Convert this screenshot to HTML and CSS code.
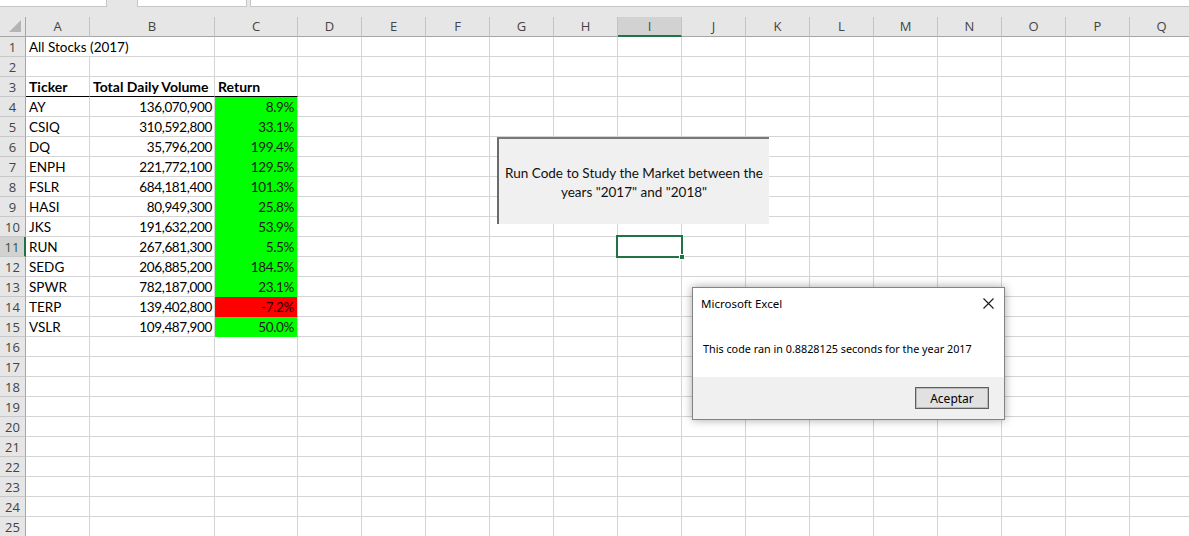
FILE: index.html
```html
<!DOCTYPE html>
<html lang="es">
<head>
<meta charset="utf-8">
<title>All Stocks (2017)</title>
<link rel="stylesheet" href="styles.css">
</head>
<body>
<div class="top">
  <div class="box namebox"></div>
  <div class="box fxbtns"></div>
  <div class="box fxbar"></div>
</div>
<div class="strip"></div>
<div class="sheet">
  <div class="row hdr">
    <span class="corner"><svg width="13" height="13" viewBox="0 0 13 13"><path d="M12 0 L12 12 L0 12 Z" fill="#b4b4b4"/></svg></span>
    <span class="ch">A</span><span class="ch">B</span><span class="ch">C</span><span class="ch">D</span><span class="ch">E</span><span class="ch">F</span><span class="ch">G</span><span class="ch">H</span><span class="ch sel">I</span><span class="ch">J</span><span class="ch">K</span><span class="ch">L</span><span class="ch">M</span><span class="ch">N</span><span class="ch">O</span><span class="ch">P</span><span class="ch">Q</span>
  </div>
  <div class="row"><span class="rh">1</span><span class="txt wide">All Stocks (2017)</span><span></span><span></span><span></span><span></span><span></span><span></span><span></span><span></span><span></span><span></span><span></span><span></span><span></span><span></span><span></span><span></span></div>
  <div class="row"><span class="rh">2</span><span></span><span></span><span></span><span></span><span></span><span></span><span></span><span></span><span></span><span></span><span></span><span></span><span></span><span></span><span></span><span></span><span></span></div>
  <div class="row"><span class="rh">3</span><span class="txt b ul">Ticker</span><span class="txt b ul">Total Daily Volume</span><span class="txt b ul">Return</span><span></span><span></span><span></span><span></span><span></span><span></span><span></span><span></span><span></span><span></span><span></span><span></span><span></span><span></span></div>
  <div class="row"><span class="rh">4</span><span class="txt">AY</span><span class="num">136,070,900</span><span class="num pos">8.9%</span><span></span><span></span><span></span><span></span><span></span><span></span><span></span><span></span><span></span><span></span><span></span><span></span><span></span><span></span></div>
  <div class="row"><span class="rh">5</span><span class="txt">CSIQ</span><span class="num">310,592,800</span><span class="num pos">33.1%</span><span></span><span></span><span></span><span></span><span></span><span></span><span></span><span></span><span></span><span></span><span></span><span></span><span></span><span></span></div>
  <div class="row"><span class="rh">6</span><span class="txt">DQ</span><span class="num">35,796,200</span><span class="num pos">199.4%</span><span></span><span></span><span></span><span></span><span></span><span></span><span></span><span></span><span></span><span></span><span></span><span></span><span></span><span></span></div>
  <div class="row"><span class="rh">7</span><span class="txt">ENPH</span><span class="num">221,772,100</span><span class="num pos">129.5%</span><span></span><span></span><span></span><span></span><span></span><span></span><span></span><span></span><span></span><span></span><span></span><span></span><span></span><span></span></div>
  <div class="row"><span class="rh">8</span><span class="txt">FSLR</span><span class="num">684,181,400</span><span class="num pos">101.3%</span><span></span><span></span><span></span><span></span><span></span><span></span><span></span><span></span><span></span><span></span><span></span><span></span><span></span><span></span></div>
  <div class="row"><span class="rh">9</span><span class="txt">HASI</span><span class="num">80,949,300</span><span class="num pos">25.8%</span><span></span><span></span><span></span><span></span><span></span><span></span><span></span><span></span><span></span><span></span><span></span><span></span><span></span><span></span></div>
  <div class="row"><span class="rh">10</span><span class="txt">JKS</span><span class="num">191,632,200</span><span class="num pos">53.9%</span><span></span><span></span><span></span><span></span><span></span><span></span><span></span><span></span><span></span><span></span><span></span><span></span><span></span><span></span></div>
  <div class="row"><span class="rh sel">11</span><span class="txt">RUN</span><span class="num">267,681,300</span><span class="num pos">5.5%</span><span></span><span></span><span></span><span></span><span></span><span class="active"><em class="cursor"></em></span><span></span><span></span><span></span><span></span><span></span><span></span><span></span><span></span></div>
  <div class="row"><span class="rh">12</span><span class="txt">SEDG</span><span class="num">206,885,200</span><span class="num pos">184.5%</span><span></span><span></span><span></span><span></span><span></span><span></span><span></span><span></span><span></span><span></span><span></span><span></span><span></span><span></span></div>
  <div class="row"><span class="rh">13</span><span class="txt">SPWR</span><span class="num">782,187,000</span><span class="num pos">23.1%</span><span></span><span></span><span></span><span></span><span></span><span></span><span></span><span></span><span></span><span></span><span></span><span></span><span></span><span></span></div>
  <div class="row"><span class="rh">14</span><span class="txt">TERP</span><span class="num">139,402,800</span><span class="num neg">-7.2%</span><span></span><span></span><span></span><span></span><span></span><span></span><span></span><span></span><span></span><span></span><span></span><span></span><span></span><span></span></div>
  <div class="row"><span class="rh">15</span><span class="txt">VSLR</span><span class="num">109,487,900</span><span class="num pos">50.0%</span><span></span><span></span><span></span><span></span><span></span><span></span><span></span><span></span><span></span><span></span><span></span><span></span><span></span><span></span></div>
  <div class="row"><span class="rh">16</span><span></span><span></span><span></span><span></span><span></span><span></span><span></span><span></span><span></span><span></span><span></span><span></span><span></span><span></span><span></span><span></span><span></span></div>
  <div class="row"><span class="rh">17</span><span></span><span></span><span></span><span></span><span></span><span></span><span></span><span></span><span></span><span></span><span></span><span></span><span></span><span></span><span></span><span></span><span></span></div>
  <div class="row"><span class="rh">18</span><span></span><span></span><span></span><span></span><span></span><span></span><span></span><span></span><span></span><span></span><span></span><span></span><span></span><span></span><span></span><span></span><span></span></div>
  <div class="row"><span class="rh">19</span><span></span><span></span><span></span><span></span><span></span><span></span><span></span><span></span><span></span><span></span><span></span><span></span><span></span><span></span><span></span><span></span><span></span></div>
  <div class="row"><span class="rh">20</span><span></span><span></span><span></span><span></span><span></span><span></span><span></span><span></span><span></span><span></span><span></span><span></span><span></span><span></span><span></span><span></span><span></span></div>
  <div class="row"><span class="rh">21</span><span></span><span></span><span></span><span></span><span></span><span></span><span></span><span></span><span></span><span></span><span></span><span></span><span></span><span></span><span></span><span></span><span></span></div>
  <div class="row"><span class="rh">22</span><span></span><span></span><span></span><span></span><span></span><span></span><span></span><span></span><span></span><span></span><span></span><span></span><span></span><span></span><span></span><span></span><span></span></div>
  <div class="row"><span class="rh">23</span><span></span><span></span><span></span><span></span><span></span><span></span><span></span><span></span><span></span><span></span><span></span><span></span><span></span><span></span><span></span><span></span><span></span></div>
  <div class="row"><span class="rh">24</span><span></span><span></span><span></span><span></span><span></span><span></span><span></span><span></span><span></span><span></span><span></span><span></span><span></span><span></span><span></span><span></span><span></span></div>
  <div class="row"><span class="rh">25</span><span></span><span></span><span></span><span></span><span></span><span></span><span></span><span></span><span></span><span></span><span></span><span></span><span></span><span></span><span></span><span></span><span></span></div>
</div>

<div class="formbtn">Run Code to Study the Market between the<br>years "2017" and "2018"</div>

<div class="dialog">
  <div class="dlg-head">
    <span class="dlg-title">Microsoft Excel</span>
    <svg class="dlg-close" width="11" height="11" viewBox="0 0 11 11"><path d="M0.5 0.5 L10.5 10.5 M10.5 0.5 L0.5 10.5" stroke="#1a1a1a" stroke-width="1.1" fill="none"/></svg>
  </div>
  <div class="dlg-msg">This code ran in 0.8828125 seconds for the year 2017</div>
  <div class="dlg-foot"><button class="dlg-btn" type="button">Aceptar</button></div>
</div>
</body>
</html>
```
FILE: styles.css
```css
html, body {
  margin: 0;
  padding: 0;
  overflow: hidden;
  background: #ffffff;
}
body {
  position: relative;
  width: 1189px;
  height: 536px;
  font-family: "Lato", "Liberation Sans", sans-serif;
  color: #000;
}

/* formula bar remnant */
.top {
  display: flex;
  height: 7px;
  background: #e6e6e6;
}
.box {
  box-sizing: border-box;
  height: 7px;
  background: #ffffff;
  border: 1px solid #c6c6c6;
  border-top: none;
}
.namebox { width: 107px; border-left: none; }
.fxbtns { width: 110px; margin-left: 30px; }
.fxbar { flex: 1; margin-left: 3px; border-right: none; }
.strip {
  height: 10px;
  background: #e6e6e6;
}

/* grid */
.sheet { width: 1194px; }
.row {
  display: grid;
  grid-template-columns: 26px 64px 125px 83px repeat(14, 64px);
  height: 20px;
}
.row > span {
  box-sizing: border-box;
  height: 20px;
  border-right: 1px solid #d4d4d4;
  border-bottom: 1px solid #d4d4d4;
  white-space: nowrap;
  overflow: hidden;
  font-size: 13.5px;
  line-height: 20px;
  padding: 0 3px;
}

.hdr > span {
  background: #e6e6e6;
  border-right: 1px solid #c3c3c3;
  border-bottom: 1px solid #a6a6a6;
  font-family: "Open Sans", "Noto Sans", sans-serif;
  font-size: 13px;
  line-height: 19px;
  text-align: center;
  color: #444;
}
.hdr > .corner {
  padding: 0;
  border-right: 1px solid #a6a6a6;
  display: flex;
  align-items: flex-end;
  justify-content: flex-end;
}
.corner svg { margin: 0 3px 3px 0; }
.hdr > .ch.sel {
  background: #d2d2d2;
  border-bottom: 2px solid #217346;
  color: #2b5a3c;
}

.row > .rh {
  background: #e6e6e6;
  border-right: 1px solid #a6a6a6;
  border-bottom: 1px solid #c8c8c8;
  font-family: "Open Sans", "Noto Sans", sans-serif;
  font-size: 13px;
  line-height: 20px;
  text-align: center;
  color: #444;
  padding: 0;
}
.row > .rh.sel {
  background: #d2d2d2;
  border-right: 2px solid #217346;
  color: #2b5a3c;
}

.row > .wide {
  grid-column: span 2;
}
.row > .b {
  font-weight: 700;
  font-size: 14px;
}
.row > .ul { border-bottom: 1px solid #000; }
.row > .num {
  text-align: right;
  padding-right: 2px;
  letter-spacing: -0.35px;
}
.row > .pos {
  background: #00ff00;
  border-bottom-color: #00ff00;
  padding-right: 3px;
  color: #1a1a1a;
}
.row > .neg {
  background: #ff0000;
  border-bottom-color: #ff0000;
  padding-right: 3px;
  color: #2a0000;
}

/* active cell I11 */
.row > .active {
  position: relative;
  overflow: visible;
}
.cursor {
  position: absolute;
  left: -2px;
  top: -2px;
  width: 67px;
  height: 23px;
  box-sizing: border-box;
  border: 2px solid #217346;
}
.cursor::after {
  content: "";
  position: absolute;
  right: -4px;
  bottom: -4px;
  width: 6px;
  height: 6px;
  background: #217346;
  border: 1px solid #fff;
  box-sizing: border-box;
}

/* form control button */
.formbtn {
  position: absolute;
  left: 497px;
  top: 137px;
  width: 272px;
  height: 87px;
  box-sizing: border-box;
  background: #f0f0f0;
  border-top: 2px solid #787878;
  border-left: 2px solid #6b6b6b;
  display: flex;
  align-items: center;
  justify-content: center;
  text-align: center;
  font-size: 13.5px;
  line-height: 19px;
  padding-top: 3px;
  color: #111;
}

/* message box */
.dialog {
  position: absolute;
  left: 692px;
  top: 287px;
  width: 313px;
  height: 133px;
  box-sizing: border-box;
  background: #ffffff;
  border: 1px solid #838383;
  box-shadow: 0 0 9px rgba(0, 0, 0, 0.35);
  display: flex;
  flex-direction: column;
  font-family: "Noto Sans", "Open Sans", sans-serif;
  color: #000;
}
.dlg-head {
  height: 31px;
  display: flex;
  align-items: center;
  justify-content: space-between;
  padding: 0 10px 0 8px;
}
.dlg-title { font-size: 11.5px; }
.dlg-close { display: block; }
.dlg-msg {
  height: 58px;
  display: flex;
  align-items: center;
  padding-left: 10px;
  font-size: 10.8px;
}
.dlg-foot {
  flex: 1;
  background: #f0f0f0;
  display: flex;
  justify-content: flex-end;
  align-items: flex-start;
  padding: 10px 15px 0 0;
}
.dlg-btn {
  width: 74px;
  height: 22px;
  box-sizing: border-box;
  background: #e1e1e1;
  border: 1px solid #5f5f5f;
  box-shadow: inset 0 0 0 1px #b9b9b9;
  font-family: "Noto Sans", "Open Sans", sans-serif;
  font-size: 12px;
  color: #000;
  padding: 0;
  margin: 0;
}
```
